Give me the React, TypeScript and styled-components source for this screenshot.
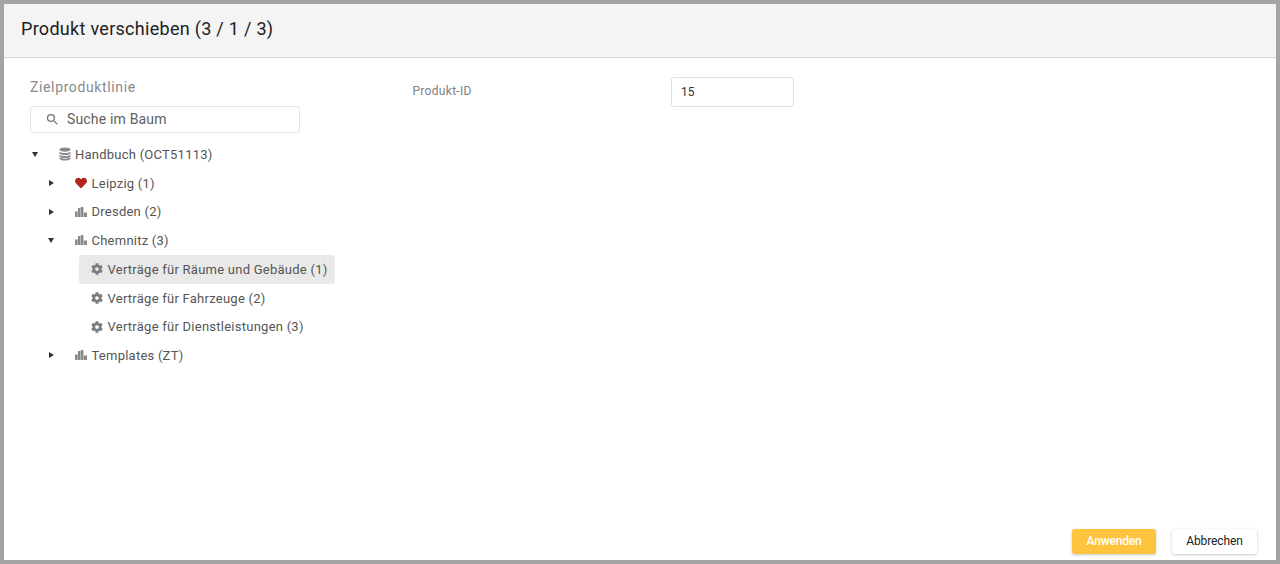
import React, { FC } from 'react';
import styled, { createGlobalStyle } from 'styled-components';
import { FaCog, FaHeart } from 'react-icons/fa';
import { MdSearch } from 'react-icons/md';

const GlobalStyle = createGlobalStyle`
  html, body {
    margin: 0;
    height: 100%;
  }
  body {
    font-family: Roboto, "Liberation Sans", sans-serif;
    background: #a3a3a3;
  }
  #root {
    height: 100%;
  }
`;

const Frame = styled.div`
  box-sizing: border-box;
  width: 1280px;
  height: 564px;
  padding: 4px;
  background: #a3a3a3;
`;

const Dialog = styled.div`
  display: flex;
  flex-direction: column;
  height: 100%;
  background: #fff;
`;

const Header = styled.header`
  box-sizing: border-box;
  display: flex;
  align-items: center;
  height: 54px;
  padding: 0 17px 4px;
  background: #f4f4f4;
  border-bottom: 1px solid #d4d4d4;
`;

const Title = styled.h1`
  margin: 0;
  font-size: 18px;
  font-weight: 400;
  letter-spacing: 0.29px;
  color: #212121;
`;

const Body = styled.div`
  flex: 1;
  display: flex;
  padding: 19px 0 0 26px;
`;

const TreeColumn = styled.section`
  width: 382px;
`;

const SectionLabel = styled.div`
  font-size: 14px;
  line-height: 20px;
  letter-spacing: 0.63px;
  color: #8a8a8a;
`;

const SearchBox = styled.div`
  box-sizing: border-box;
  display: flex;
  align-items: center;
  gap: 7px;
  width: 270px;
  height: 27px;
  margin-top: 9px;
  padding: 0 0 2px 14px;
  border: 1px solid #e4e4e4;
  border-radius: 3px;
  font-size: 14px;
  letter-spacing: 0.17px;
  color: #616161;
  svg {
    color: #757575;
    margin-top: 2px;
  }
`;

const Tree = styled.div`
  display: flex;
  flex-direction: column;
  margin-top: 7px;
`;

const Row = styled.div<{ $level: number }>`
  display: flex;
  align-items: center;
  height: 28.7px;
  margin-left: ${p => p.$level * 16.5}px;
  font-size: 13px;
  letter-spacing: 0.24px;
  color: #555;
`;

const Arrow = styled.span<{ $open: boolean }>`
  display: block;
  flex: none;
  width: 0;
  height: 0;
  margin-left: ${p => (p.$open ? 1.5 : 2)}px;
  border-style: solid;
  ${p => (p.$open
    ? 'border-width: 5px 3.75px 0 3.75px; border-color: #333 transparent transparent transparent; margin-top: 1px;'
    : 'border-width: 3.75px 0 3.75px 5px; border-color: transparent transparent transparent #333;')}
`;

const ArrowSlot = styled.span`
  display: flex;
  align-items: center;
  flex: none;
  width: 28.5px;
`;

const IconSlot = styled.span<{ $color?: string }>`
  display: flex;
  align-items: center;
  justify-content: center;
  flex: none;
  width: 12px;
  margin-right: 4.5px;
  color: ${p => p.$color || '#8a8a8a'};
`;

const Leaf = styled.div<{ $selected?: boolean }>`
  display: flex;
  align-items: center;
  align-self: flex-start;
  height: ${p => (p.$selected ? 29 : 28.5)}px;
  margin-left: 49px;
  padding: 0 7.5px 0 11.5px;
  border-radius: 3px;
  font-size: 13px;
  letter-spacing: 0.25px;
  color: #555;
  background: ${p => (p.$selected ? '#e9e9e9' : 'transparent')};
`;

const LeafIcon = styled.span`
  display: flex;
  flex: none;
  margin-right: 5px;
  color: #7d7d7d;
`;

const FormColumn = styled.section`
  display: grid;
  grid-template-columns: 258.5px 123px;
  align-items: center;
  align-self: flex-start;
  margin-left: 0.5px;
`;

const FieldLabel = styled.label`
  margin-bottom: 2px;
  font-size: 12px;
  letter-spacing: 0.3px;
  color: #808080;
`;

const FieldValue = styled.div`
  box-sizing: border-box;
  display: flex;
  align-items: center;
  height: 30px;
  padding-left: 9px;
  border: 1px solid #e0e0e0;
  border-radius: 3px;
  font-size: 12px;
  color: #333;
`;

const Footer = styled.footer`
  display: flex;
  justify-content: flex-end;
  gap: 16px;
  padding: 0 19px 6px 0;
`;

const Button = styled.button<{ $primary?: boolean }>`
  box-sizing: border-box;
  height: 25px;
  width: ${p => (p.$primary ? 84 : 85)}px;
  padding: 0 0 1px;
  border: 0;
  border-radius: 3px;
  font-family: inherit;
  font-size: 12px;
  letter-spacing: ${p => (p.$primary ? -0.2 : -0.1)}px;
  font-weight: ${p => (p.$primary ? 500 : 400)};
  color: ${p => (p.$primary ? '#fff' : '#212121')};
  background: ${p => (p.$primary ? '#ffc43d' : '#fff')};
  box-shadow: 0 1px 3px rgba(0, 0, 0, 0.22);
`;

const DatabaseIcon: FC = () => (
  <svg width="12" height="14" viewBox="0 0 12 14" fill="currentColor">
    <ellipse cx="6" cy="2.6" rx="5.6" ry="2.1" />
    <path d="M.4 4.4v1.5c0 1.2 2.5 2.1 5.6 2.1s5.6-.9 5.6-2.1V4.4C10.6 5.5 8.5 6 6 6S1.4 5.5.4 4.4z" />
    <path d="M.4 7.4v1.5c0 1.2 2.5 2.1 5.6 2.1s5.6-.9 5.6-2.1V7.4C10.6 8.5 8.5 9 6 9S1.4 8.5.4 7.4z" />
    <path d="M.4 10.1v1.3c0 1.2 2.5 2.1 5.6 2.1s5.6-.9 5.6-2.1v-1.3c-1 1.1-3.1 1.6-5.6 1.6s-4.6-.5-5.6-1.6z" />
  </svg>
);

const BarsIcon: FC = () => (
  <svg width="12" height="10" viewBox="0 0 12 10" fill="currentColor">
    <rect x="0" y="4.5" width="2.6" height="5.5" />
    <rect x="2.9" y="1" width="2.6" height="9" />
    <rect x="5.8" y="0" width="2.6" height="10" />
    <rect x="8.7" y="5.5" width="3.3" height="4.5" />
  </svg>
);

type Branch = {
  label: string;
  open: boolean;
  icon: React.ReactNode;
  color?: string;
};

const leaves = [
  { label: 'Verträge für Räume und Gebäude (1)', selected: true },
  { label: 'Verträge für Fahrzeuge (2)', selected: false },
  { label: 'Verträge für Dienstleistungen (3)', selected: false },
];

const TreeBranch: FC<Branch & { level: number }> = ({ label, open, icon, color, level }) => (
  <Row $level={level}>
    <ArrowSlot><Arrow $open={open} /></ArrowSlot>
    <IconSlot $color={color}>{icon}</IconSlot>
    {label}
  </Row>
);

const App: FC = () => (
  <Frame>
    <GlobalStyle />
    <Dialog>
      <Header>
        <Title>Produkt verschieben (3 / 1 / 3)</Title>
      </Header>
      <Body>
        <TreeColumn>
          <SectionLabel>Zielproduktlinie</SectionLabel>
          <SearchBox>
            <MdSearch size={15} />
            Suche im Baum
          </SearchBox>
          <Tree>
            <TreeBranch level={0} label="Handbuch (OCT51113)" open icon={<DatabaseIcon />} />
            <TreeBranch level={1} label="Leipzig (1)" open={false} icon={<FaHeart size={12} />} color="#b3261e" />
            <TreeBranch level={1} label="Dresden (2)" open={false} icon={<BarsIcon />} />
            <TreeBranch level={1} label="Chemnitz (3)" open icon={<BarsIcon />} />
            {leaves.map(({ label, selected }) => (
              <Leaf key={label} $selected={selected}>
                <LeafIcon><FaCog size={12} /></LeafIcon>
                {label}
              </Leaf>
            ))}
            <TreeBranch level={1} label="Templates (ZT)" open={false} icon={<BarsIcon />} />
          </Tree>
        </TreeColumn>
        <FormColumn>
          <FieldLabel>Produkt-ID</FieldLabel>
          <FieldValue>15</FieldValue>
        </FormColumn>
      </Body>
      <Footer>
        <Button $primary>Anwenden</Button>
        <Button>Abbrechen</Button>
      </Footer>
    </Dialog>
  </Frame>
);

export default App;
